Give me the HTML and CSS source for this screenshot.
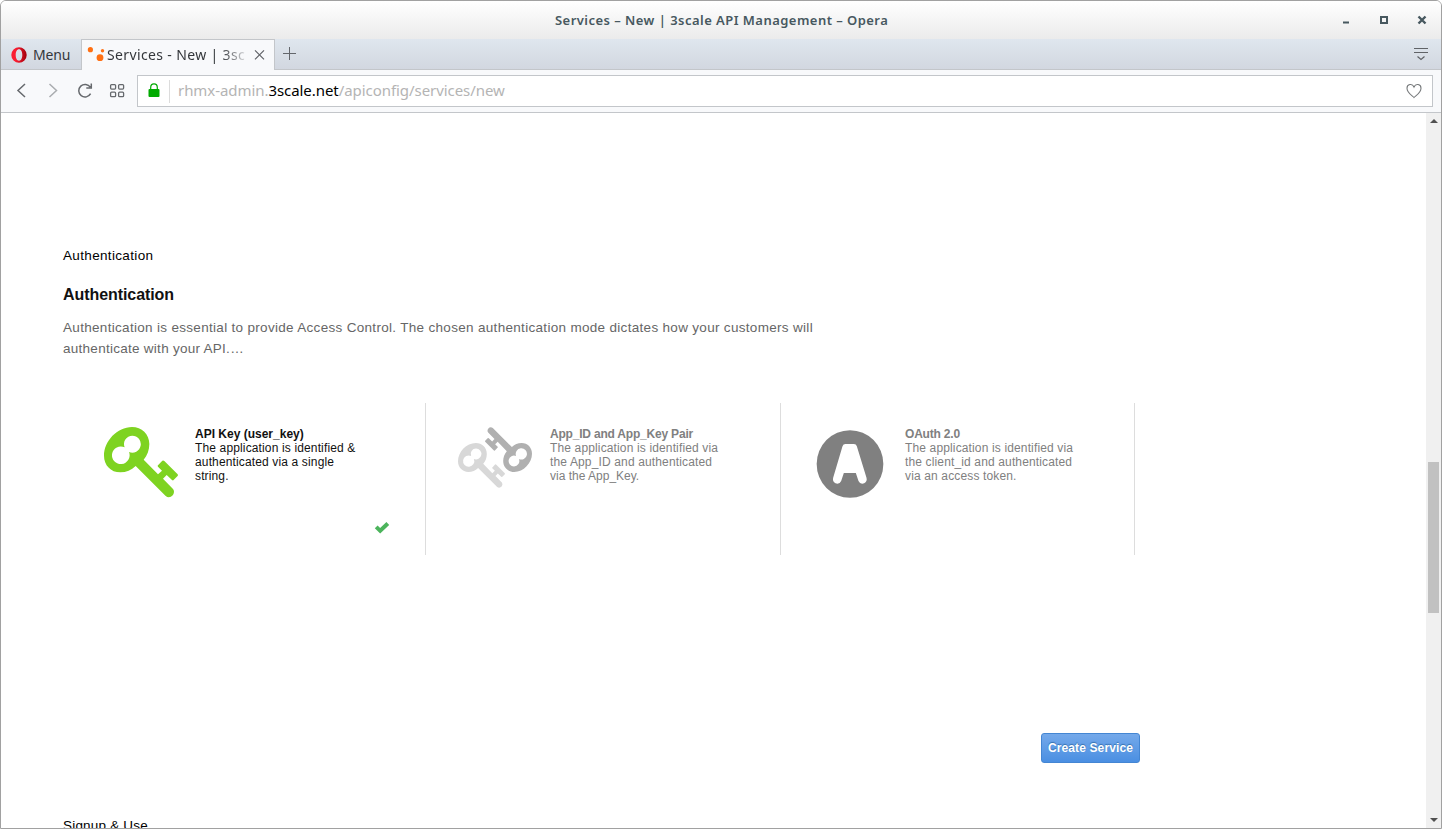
FILE: index.html
```
<!DOCTYPE html>
<html lang="en">
<head>
<meta charset="utf-8">
<title>Services – New | 3scale API Management</title>
<link rel="stylesheet" href="styles.css">
</head>
<body>
<svg width="0" height="0" class="defs" aria-hidden="true">
  <symbol id="key" viewBox="42 80 225 213">
    <path fill-rule="evenodd" d="M126 80C155 80 178 101 178 131C178 149 172 165 161 178L204 222L216 211L204 199Q202 197 204 195L217 181Q220 179 223 182L263 222Q265 225 262 228L250 240Q248 241 246 239L230 224L219 235L249 266Q255 273 249 284Q238 296 227 287L137 197C124 209 109 216 91 216C62 216 42 194 42 166C42 122 82 80 126 80ZM127 106A25 25 0 0 0 104 141A26.500 26.500 0 1 0 117 155A25.500 25.500 0 1 0 127 106Z"/>
  </symbol>
</svg>
<div class="window">
  <header class="titlebar">
    <span class="window-title">Services – New | 3scale API Management – Opera</span>
    <svg class="window-buttons" width="86" height="14" viewBox="0 0 86 14" fill="none" stroke="#47585f">
      <path d="M1 9.500h6" stroke-width="2"/>
      <rect x="39" y="4" width="6" height="6" stroke-width="2"/>
      <path d="M76.500 3.500l7 7M83.500 3.500l-7 7" stroke-width="2.400"/>
    </svg>
  </header>
  <nav class="tabs">
    <div class="menu">
      <svg width="16" height="16" viewBox="0 0 16 16">
        <defs><linearGradient id="ring"><stop offset=".3" stop-color="#fa1e32"/><stop offset="1" stop-color="#a2000c"/></linearGradient></defs>
        <path fill="url(#ring)" fill-rule="evenodd" d="M8 .2a7.700 7.800 0 1 0 0 15.600A7.700 7.800 0 0 0 8 .2ZM8 2.300C10.200 2.300 11.300 5 11.300 8S10.200 13.700 8 13.700S4.700 11 4.700 8S5.800 2.300 8 2.300Z"/>
      </svg>
      <span class="menu-label">Menu</span>
    </div>
    <div class="tab">
      <svg width="20" height="18" viewBox="0 0 20 18" fill="#ff7013"><circle cx="3.400" cy="3.700" r="2.600"/><circle cx="15.500" cy="4.700" r="1.700"/><circle cx="13" cy="11.700" r="3.400"/></svg>
      <span class="tab-label">Services - New | 3sc</span>
      <svg class="tab-close" width="12" height="12" viewBox="0 0 12 12" fill="none" stroke="#606367" stroke-width="1.200"><path d="M1 1.300l9 9M10 1.300l-9 9"/></svg>
    </div>
    <svg class="new-tab" width="14" height="14" viewBox="0 0 14 14" fill="none" stroke="#63666b"><path d="M6.500 0v13M0 6.500h13"/></svg>
    <svg class="tab-menu" width="14" height="14" viewBox="0 0 14 14" fill="none" stroke="#606367"><path d="M0 .5h14M0 4.500h14M3.500 8.500L7 11.500l3.500-3" stroke-width="1.200"/></svg>
  </nav>
  <div class="toolbar">
    <svg width="120" height="20" viewBox="0 0 120 20" fill="none" stroke="#66696d" stroke-width="1.500">
      <path d="M19 3L12 9.500l7 6.500"/>
      <path d="M43.500 3l7 6.500-7 6.500" stroke="#aaadb0"/>
      <path d="M84.600 12.700A6.300 6.300 0 1 1 84.300 6.200M85.300 2.500v4.500h-5"/>
      <g stroke-width="1.300"><rect x="104.600" y="3.600" width="5" height="4.500" rx="1"/><rect x="112.600" y="3.600" width="5" height="4.500" rx="1"/><rect x="104.600" y="11.200" width="5" height="4.500" rx="1"/><rect x="112.600" y="11.200" width="5" height="4.500" rx="1"/></g>
    </svg>
    <div class="address">
      <svg class="lock" width="12" height="15" viewBox="0 0 12 15"><rect x=".5" y="6" width="11" height="8" rx="1" fill="#0a0"/><path d="M2.700 7V4.500a3.300 3.600 0 0 1 6.600 0V7" fill="none" stroke="#0a0" stroke-width="1.200"/></svg>
      <span class="divider"></span>
      <span class="url"><span class="sub">rhmx-admin.</span><span class="domain">3scale.net</span><span class="path">/apiconfig/services/new</span></span>
      <svg class="heart" width="16" height="16" viewBox="0 0 16 16" fill="none" stroke="#777a7c" stroke-width="1.100"><path d="M8 14.500C6.800 13 1 10 1 5.200C1 1 6.300 0 8 4C9.700 0 15 1 15 5.200C15 10 9.200 13 8 14.500Z"/></svg>
    </div>
  </div>
  <div class="viewport">
    <main class="page">
      <p class="legend">Authentication</p>
      <h1 class="heading">Authentication</h1>
      <p class="intro">Authentication is essential to provide Access Control. The chosen authentication mode dictates how your customers will<br><span class="intro-end">authenticate with your API.…</span></p>
      <div class="options">
        <section class="option selected">
          <svg class="option-icon key-icon" width="75" height="71" fill="#7ed321"><use href="#key"/></svg>
          <div class="option-text"><h2>API Key (user_key)</h2><p>The application is identified &amp;<br>authenticated via a single<br>string.</p></div>
          <svg class="check" width="16" height="12" viewBox="0 0 16 12" fill="none" stroke="#4cb45c" stroke-width="4"><path d="M2.200 4.800l4 4L13.800 1.500"/></svg>
        </section>
        <section class="option">
          <svg class="option-icon pair-icon" width="75" height="62" viewBox="39 81 225 186"><use href="#key" x="39" y="129" width="143" height="136" fill="#d8d8d8"/><use href="#key" x="39" y="129" width="143" height="136" fill="#b0b0b0" transform="rotate(180 150 172.500)"/></svg>
          <div class="option-text"><h2 class="tight">App_ID and App_Key Pair</h2><p>The application is identified via<br>the App_ID and authenticated<br><span class="plain">via the App_Key.</span></p></div>
        </section>
        <section class="option">
          <svg class="option-icon oauth-icon" width="68" height="68" viewBox="48.500 90 204 204"><ellipse cx="150.500" cy="192" rx="100" ry="101.500" fill="#808080"/><path fill="#fff" d="M137 132H162Q169 132 171 139L200 233Q203 244 193 250Q181 254 176 243L168 219H132L124 243Q119 254 107 250Q97 244 100 233L128 139Q130 132 137 132Z"/></svg>
          <div class="option-text"><h2 class="tight">OAuth 2.0</h2><p>The application is identified via<br>the client_id and authenticated<br>via an access token.</p></div>
        </section>
      </div>
      <button class="create">Create Service</button>
      <p class="legend next">Signup &amp; Use</p>
    </main>
    <aside class="scrollbar">
      <svg width="8" height="4" viewBox="0 0 8 4"><path d="M0 4L4 0l4 4Z" fill="#505050"/></svg>
      <span class="thumb"></span>
      <svg width="8" height="4" viewBox="0 0 8 4"><path d="M0 0h8L4 4Z" fill="#505050"/></svg>
    </aside>
  </div>
</div>
</body>
</html>
```
FILE: styles.css
```
* { box-sizing: border-box; }
body { margin: 0; overflow: hidden; background: #fff; font-family: "Liberation Sans", Arial, sans-serif; }
svg { display: block; flex: none; }
p, h1, h2 { margin: 0; }
.defs { position: absolute; }
.window { display: flex; flex-direction: column; width: 1442px; height: 829px; border: 1px solid #a1a1a1; border-radius: 6px 6px 0 0; overflow: hidden; }

.titlebar { display: flex; align-items: center; height: 38px; flex: none; padding-left: 554px; background: linear-gradient(#fff, #ebebeb); }
.window-title { color: #47585f; font: 600 13px/20px "Noto Sans", "Open Sans", sans-serif; white-space: nowrap; letter-spacing: .46px; }
.window-buttons { margin: 0 13px 0 auto; }

.tabs { display: flex; align-items: center; height: 31px; flex: none; background: linear-gradient(#dfe6ee, #d2d7e0); border-bottom: 1px solid #c3c6ca; font: 14px/20px "Noto Sans", "Open Sans", sans-serif; color: #34373b; }
.menu { display: flex; align-items: center; gap: 6px; width: 80px; padding: 2px 0 0 10px; letter-spacing: -.2px; }
.tab { display: flex; align-items: center; align-self: stretch; width: 194px; height: 31px; margin-bottom: -1px; padding-left: 5px; background: #f8f9fb; border: 1px solid #c3c6ca; border-bottom: 0; }
.tab-label { width: 139px; white-space: nowrap; letter-spacing: .36px; -webkit-mask-image: linear-gradient(90deg, #000 114px, transparent 143px); mask-image: linear-gradient(90deg, #000 114px, transparent 143px); }
.tab-close { margin-left: 8px; }
.new-tab { margin-left: 8px; }
.tab-menu { margin: 2px 13px 0 auto; }

.toolbar { display: flex; align-items: center; height: 43px; flex: none; padding: 0 8px 0 5px; background: #f8f9fb; border-bottom: 1px solid #c3c6ca; }
.address { display: flex; align-items: center; flex: 1; height: 32px; margin-left: 11px; padding: 0 10px; background: #fff; border: 1px solid #c3c6ca; }
.lock { margin-bottom: 2px; }
.divider { width: 1px; height: 23px; margin: 0 8px 0 9px; background: #dcdcdc; }
.url { margin-bottom: 2px; font: 15px/22px "Noto Sans", "Open Sans", sans-serif; color: #b4b4b4; white-space: nowrap; letter-spacing: -.06px; }
.domain { color: #000; }
.heart { margin-left: auto; }

.viewport { display: flex; flex: 1; min-height: 0; }
.page { display: flex; flex-direction: column; flex: 1; padding: 133px 0 0 62px; overflow: hidden; white-space: nowrap; }
.page > * { flex-shrink: 0; }
.legend { font-size: 13.5px; line-height: 20px; color: #000; letter-spacing: .34px; }
.heading { margin-top: 17px; font-size: 16px; line-height: 24px; color: #111; letter-spacing: -.07px; }
.intro { margin-top: 10px; font-size: 13.5px; line-height: 21px; color: #666; letter-spacing: .31px; }
.intro-end { letter-spacing: .27px; }
.options { display: grid; grid-template-columns: 355px 355px 354px; height: 152px; margin: 44px 0 0 8px; }
.option { position: relative; display: flex; border-right: 1px solid #ddd; color: #808080; font-size: 12px; line-height: 14px; letter-spacing: .14px; }
.option h2 { font-size: 12px; line-height: 14px; letter-spacing: 0; }
.option h2.tight { letter-spacing: -.2px; }
.plain { letter-spacing: 0; }
.selected { color: #111; }
.option-icon { margin-top: 24px; }
.key-icon { margin-left: 33px; }
.pair-icon { margin-left: 32px; }
.oauth-icon { margin: 27px 0 0 35px; }
.option-text { position: absolute; left: 124px; top: 24px; }
.check { position: absolute; left: 303px; top: 119px; }
.create { align-self: flex-start; width: 99px; height: 30px; margin: 178px 0 0 978px; padding: 0; border: 1px solid #4486d3; border-radius: 3px; background: linear-gradient(#74a9ea, #4a8fe2); color: #fff; font: bold 12px/14px "Liberation Sans", Arial, sans-serif; letter-spacing: .13px; text-shadow: 0 -1px 1px #356fae; }
.next { margin-top: 53px; letter-spacing: .2px; }

.scrollbar { display: flex; flex-direction: column; align-items: center; width: 15px; padding: 6px 0; background: #f0f0f0; }
.thumb { width: 11px; height: 151px; margin: 339px 0 auto; background: #c1c1c1; }
```
